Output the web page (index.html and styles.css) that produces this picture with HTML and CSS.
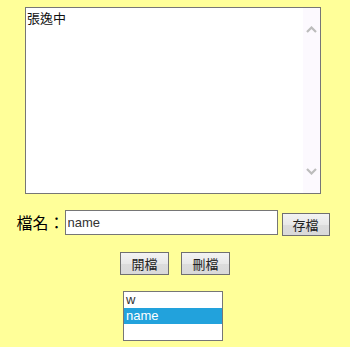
FILE: index.html
```html
<!DOCTYPE html>
<html lang="zh-Hant">
<head>
    <meta charset="UTF-8">
    <title>記事本</title>
    <link rel="stylesheet" href="styles.css">
</head>
<body>
    <div class="page">
        <div class="memo">
            <textarea class="memo-text" id="memo">張逸中</textarea>
            <div class="memo-bar">
                <svg width="11" height="7" viewBox="0 0 11 7"><polyline points="1,6 5.5,1.5 10,6" fill="none" stroke="#bcbcbc" stroke-width="2.2"/></svg>
                <svg width="11" height="7" viewBox="0 0 11 7"><polyline points="1,1 5.5,5.5 10,1" fill="none" stroke="#bcbcbc" stroke-width="2.2"/></svg>
            </div>
        </div>

        <div class="name-row">
            <label for="fileName" class="name-label">檔名：</label>
            <input type="text" id="fileName" class="name-input" value="name">
            <button class="btn btn-save">存檔</button>
        </div>

        <div class="btn-row">
            <button class="btn">開檔</button>
            <button class="btn">刪檔</button>
        </div>

        <div class="file-list">
            <div class="file-item">w</div>
            <div class="file-item selected">name</div>
        </div>
    </div>
</body>
</html>
```

FILE: styles.css
```css
body {
    margin: 0;
    background-color: #ffff99;
    font-family: "Liberation Sans", Arial, "Noto Sans CJK TC", sans-serif;
}

.page {
    display: flex;
    flex-direction: column;
    align-items: center;
    padding: 7px 4px 0 0;
}

.memo {
    display: flex;
    width: 296px;
    height: 187px;
    box-sizing: border-box;
    border: 1px solid #767676;
    background-color: #ffffff;
}

.memo-text {
    flex: 1;
    margin: 0;
    padding: 2px 1px;
    border: none;
    outline: none;
    resize: none;
    overflow: hidden;
    font-family: "Noto Sans CJK TC", sans-serif;
    font-size: 13px;
    line-height: 16px;
    color: #111111;
    background: transparent;
}

.memo-bar {
    width: 17px;
    background-color: #fcf9fe;
    display: flex;
    flex-direction: column;
    justify-content: space-between;
    align-items: center;
    padding: 18px 0 18px;
}

.memo-bar svg {
    display: block;
}

.name-row {
    display: flex;
    align-items: flex-start;
    margin-top: 16px;
}

.name-label {
    width: 48px;
    font-family: "Noto Sans CJK TC", sans-serif;
    font-size: 16px;
    line-height: 25px;
    color: #000000;
}

.name-input {
    width: 213px;
    height: 25px;
    box-sizing: border-box;
    margin: 0;
    padding: 1px 2px;
    border: 1px solid #767676;
    border-radius: 0;
    font-family: "Liberation Sans", Arial, sans-serif;
    font-size: 13px;
    color: #333333;
    background-color: #ffffff;
    outline: none;
}

.btn {
    width: 49px;
    height: 23px;
    box-sizing: border-box;
    margin: 0;
    padding: 0;
    border: 1px solid #707070;
    border-radius: 0;
    background: linear-gradient(#f3f3f3, #e8e8e8 50%, #dcdcdc 51%, #d9d9d9);
    font-family: "Noto Sans CJK TC", sans-serif;
    font-size: 13px;
    line-height: 20px;
    color: #222222;
    cursor: pointer;
}

.btn-save {
    width: 48px;
    margin: 3px 0 0 4px;
}

.btn-row {
    display: flex;
    gap: 12px;
    margin: 16px 0 0 4px;
}

.file-list {
    width: 100px;
    height: 50px;
    box-sizing: border-box;
    margin-top: 16px;
    border: 1px solid #767676;
    background-color: #ffffff;
}

.file-item {
    height: 16px;
    padding: 0 2px;
    font-size: 13px;
    line-height: 15px;
    color: #333333;
}

.file-item.selected {
    background-color: #22a2dc;
    color: #ffffff;
}
```
